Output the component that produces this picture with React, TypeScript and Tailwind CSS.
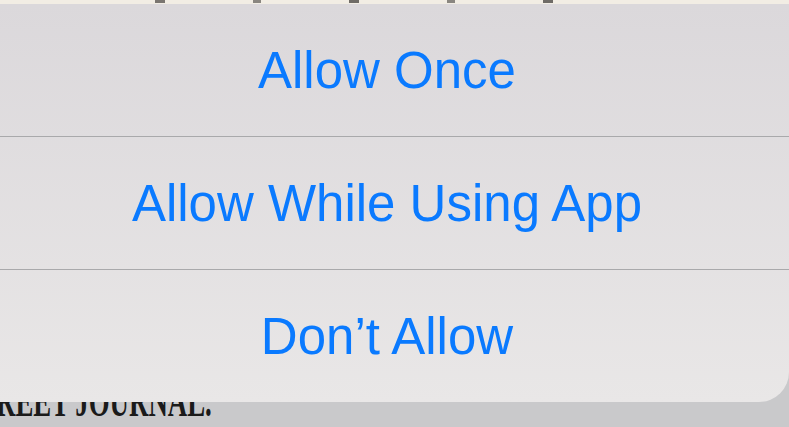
import React from "react";

const options = ["Allow Once", "Allow While Using App", "Don\u2019t Allow"];

const App = () => {
  return (
    <div className="relative w-[789px] h-[427px] overflow-hidden bg-[#c9c9cb]">
      {/* page behind the sheet: masthead peeking out below */}
      <div
        className="absolute left-[-4px] top-[380px] text-[44px] font-bold leading-none text-[#1a1a1a] origin-left scale-x-[0.61] whitespace-nowrap"
        style={{ fontFamily: '"Liberation Serif", "DejaVu Serif", serif' }}
      >
        REET JOURNAL.
      </div>

      <div className="relative flex flex-col">
        {/* strip of the map behind, above the sheet */}
        <div className="h-[4px] bg-[#f2ede4] flex items-start gap-[88px] pl-[155px]">
          <div className="w-[10px] h-[3px] bg-[#7a7570]" />
          <div className="w-[8px] h-[3px] bg-[#8a8680]" />
          <div className="w-[10px] h-[3px] bg-[#6f6b66]" />
          <div className="w-[8px] h-[3px] bg-[#8a8680]" />
          <div className="w-[10px] h-[3px] bg-[#6f6b66]" />
        </div>

        {/* action sheet */}
        <div className="w-full h-[398px] rounded-br-[30px] overflow-hidden bg-gradient-to-b from-[#dbd8db] to-[#e9e7e7] flex flex-col">
          {options.map((label, i) => (
            <div
              key={label}
              className={`flex-1 flex items-center justify-center pr-[15px] ${
                i > 0 ? "border-t border-[#a9a9ab]" : ""
              }`}
            >
              <span
                className="text-[51px] leading-none text-[#0a7aff]"
                style={{ fontFamily: '"Liberation Sans", Arial, sans-serif' }}
              >
                {label}
              </span>
            </div>
          ))}
        </div>
      </div>
    </div>
  );
};

export default App;
